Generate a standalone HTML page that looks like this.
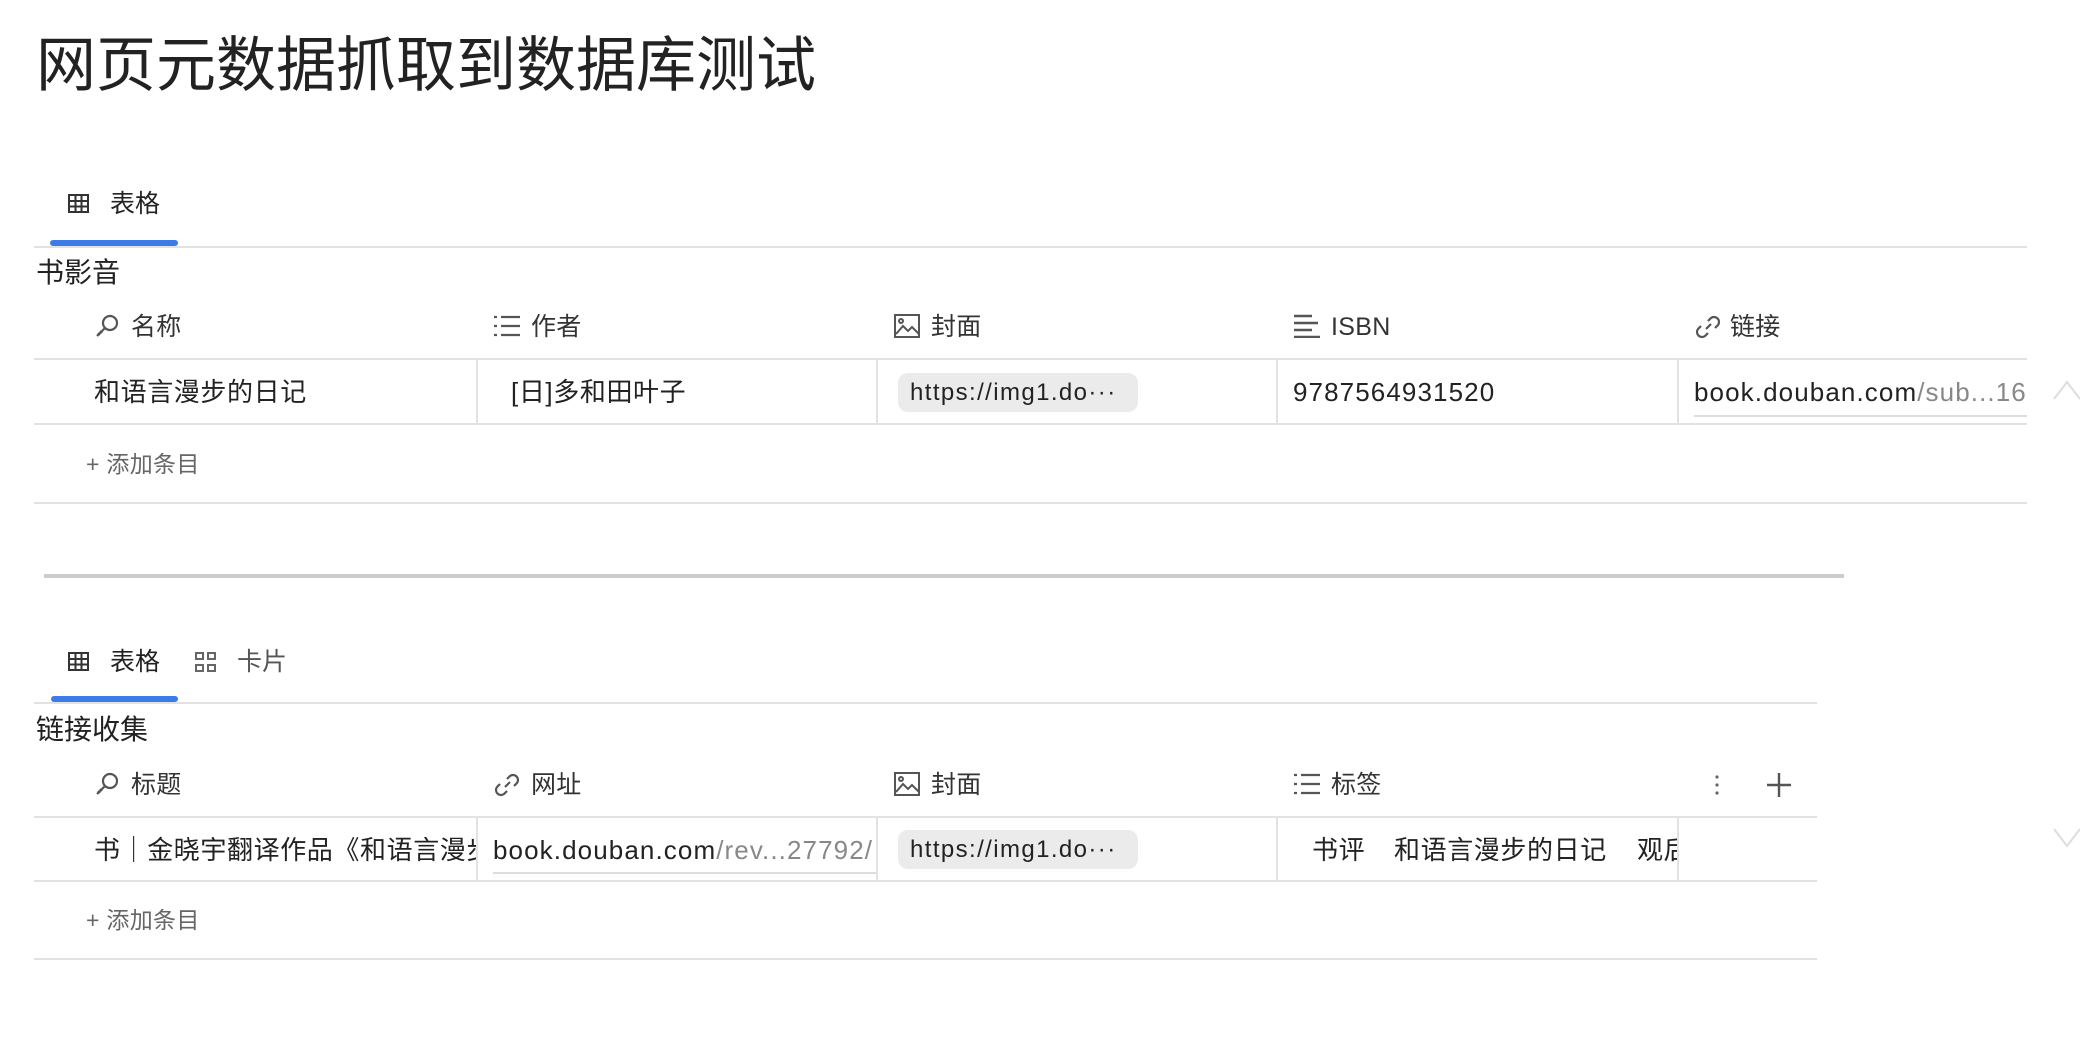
<!DOCTYPE html>
<html><head><meta charset="utf-8"><style>
*{margin:0;padding:0;box-sizing:border-box}
body{width:2080px;height:1050px;background:#fff;position:relative;overflow:hidden;font-family:"Liberation Sans","Noto Sans CJK SC",sans-serif;color:#222}
.a{position:absolute;white-space:nowrap}
.h{font-size:25px;color:#333;line-height:30px;letter-spacing:0.3px}
.c{font-size:26px;color:#222;line-height:30px;letter-spacing:0.6px}
.hl{position:absolute;height:2px;background:#e2e2e2}
.vl{position:absolute;width:2px;background:#e2e2e2}
.pill{position:absolute;background:#ebebeb;border-radius:10px;font-size:24px;line-height:39px;padding-left:12px;color:#222;letter-spacing:1.4px;overflow:hidden}
.add{font-size:23px;color:#666;line-height:28px;letter-spacing:0.3px}
.ul{position:absolute;height:6px;background:#3b7ce9;border-radius:3px}
svg{position:absolute}
</style></head><body>
<div class="a" style="left:36px;top:31px;font-size:60px;line-height:70px;color:#222;letter-spacing:0">网页元数据抓取到数据库测试</div>

<svg style="left:68px;top:194px" width="21" height="19" viewBox="0 0 21 19" fill="none" stroke="#333" stroke-width="2"><rect x="1" y="1" width="19" height="17"/><path d="M1 7h19M1 12.5h19M7.5 1v17M13.5 1v17"/></svg>
<div class="a" style="left:110px;top:189px;font-size:25px;line-height:30px;color:#222">表格</div>
<div class="ul" style="left:50px;top:240px;width:128px"></div>
<div class="hl" style="left:34px;top:246px;width:1993px"></div>
<div class="a" style="left:36px;top:256px;font-size:28px;line-height:34px;color:#222">书影音</div>

<svg style="left:94px;top:313px" width="26" height="26" viewBox="0 0 26 26" fill="none" stroke="#555" stroke-width="2.2"><circle cx="16" cy="10" r="7"/><path d="M11 15L3 23M4 20l2 2M6 18l2 2"/></svg>
<div class="a h" style="left:131px;top:312px">名称</div>
<svg style="left:493px;top:315px" width="28" height="22" viewBox="0 0 28 22" fill="none" stroke="#555" stroke-width="2.2"><path d="M8 2h19M8 11h19M8 20h19M1 2h3M1 11h3M1 20h3"/></svg>
<div class="a h" style="left:531px;top:312px">作者</div>
<svg style="left:894px;top:314px" width="26" height="24" viewBox="0 0 26 24" fill="none" stroke="#555" stroke-width="2"><rect x="1" y="1" width="24" height="22"/><circle cx="7" cy="7" r="2"/><path d="M2 20l7-8 5 5 4-4 7 7"/></svg>
<div class="a h" style="left:931px;top:312px">封面</div>
<svg style="left:1293px;top:314px" width="28" height="24" viewBox="0 0 28 24" fill="none" stroke="#555" stroke-width="2.4"><path d="M1 2h18M1 9h24M1 16h18M1 23h26"/></svg>
<div class="a h" style="left:1331px;top:312px">ISBN</div>
<svg style="left:1694px;top:313px" width="28" height="28" viewBox="0 0 28 28" fill="none" stroke="#555" stroke-width="2.2"><path d="M12 16l5-5"/><path d="M14 8l3-3a5 5 0 017 7l-3 3"/><path d="M14 20l-3 3a5 5 0 01-7-7l3-3"/></svg>
<div class="a h" style="left:1730px;top:312px">链接</div>

<div class="hl" style="left:34px;top:358px;width:1993px"></div>
<div class="hl" style="left:34px;top:423px;width:1993px"></div>
<div class="vl" style="left:476px;top:358px;height:66px"></div>
<div class="vl" style="left:876px;top:358px;height:66px"></div>
<div class="vl" style="left:1276px;top:358px;height:66px"></div>
<div class="vl" style="left:1677px;top:358px;height:66px"></div>
<div class="a c" style="left:94px;top:377px">和语言漫步的日记</div>
<div class="a c" style="left:511px;top:377px">[日]多和田叶子</div>
<div class="pill" style="left:898px;top:373px;width:240px">https://img1.do···</div>
<div class="a c" style="left:1293px;top:377px;letter-spacing:1.1px">9787564931520</div>
<div style="position:absolute;left:1694px;top:372px;width:333px;height:46px;overflow:hidden"><div class="a c" style="left:0;top:5px;letter-spacing:1.1px">book.douban.com<span style="color:#888">/sub...16022</span></div><div style="position:absolute;left:0;top:43px;width:333px;height:2px;background:#ddd"></div></div>

<div class="a add" style="left:86px;top:450px">+ 添加条目</div>
<div class="hl" style="left:34px;top:502px;width:1993px"></div>
<svg style="left:2053px;top:380px" width="30" height="20" viewBox="0 0 30 20" fill="none" stroke="#ddd" stroke-width="2"><path d="M1 19L14 2 27 19"/></svg>

<div style="position:absolute;left:44px;top:574px;width:1800px;height:4px;background:#ccc"></div>

<svg style="left:68px;top:652px" width="21" height="19" viewBox="0 0 21 19" fill="none" stroke="#333" stroke-width="2"><rect x="1" y="1" width="19" height="17"/><path d="M1 7h19M1 12.5h19M7.5 1v17M13.5 1v17"/></svg>
<div class="a" style="left:110px;top:647px;font-size:25px;line-height:30px;color:#222">表格</div>
<svg style="left:195px;top:652px" width="21" height="20" viewBox="0 0 21 20" fill="none" stroke="#666" stroke-width="2"><rect x="1" y="1" width="7" height="6"/><rect x="13" y="1" width="7" height="6"/><rect x="1" y="13" width="7" height="6"/><rect x="13" y="13" width="7" height="6"/></svg>
<div class="a" style="left:237px;top:647px;font-size:25px;line-height:30px;color:#555">卡片</div>
<div class="ul" style="left:51px;top:696px;width:127px"></div>
<div class="hl" style="left:34px;top:702px;width:1783px"></div>
<div class="a" style="left:36px;top:713px;font-size:28px;line-height:34px;color:#222">链接收集</div>

<svg style="left:94px;top:771px" width="26" height="26" viewBox="0 0 26 26" fill="none" stroke="#555" stroke-width="2.2"><circle cx="16" cy="10" r="7"/><path d="M11 15L3 23M4 20l2 2M6 18l2 2"/></svg>
<div class="a h" style="left:131px;top:770px">标题</div>
<svg style="left:493px;top:771px" width="28" height="28" viewBox="0 0 28 28" fill="none" stroke="#555" stroke-width="2.2"><path d="M12 16l5-5"/><path d="M14 8l3-3a5 5 0 017 7l-3 3"/><path d="M14 20l-3 3a5 5 0 01-7-7l3-3"/></svg>
<div class="a h" style="left:531px;top:770px">网址</div>
<svg style="left:894px;top:772px" width="26" height="24" viewBox="0 0 26 24" fill="none" stroke="#555" stroke-width="2"><rect x="1" y="1" width="24" height="22"/><circle cx="7" cy="7" r="2"/><path d="M2 20l7-8 5 5 4-4 7 7"/></svg>
<div class="a h" style="left:931px;top:770px">封面</div>
<svg style="left:1293px;top:773px" width="28" height="22" viewBox="0 0 28 22" fill="none" stroke="#555" stroke-width="2.2"><path d="M8 2h19M8 11h19M8 20h19M1 2h3M1 11h3M1 20h3"/></svg>
<div class="a h" style="left:1331px;top:770px">标签</div>
<svg style="left:1714px;top:774px" width="6" height="22" viewBox="0 0 6 22" fill="#666"><circle cx="3" cy="3" r="1.6"/><circle cx="3" cy="11" r="1.6"/><circle cx="3" cy="19" r="1.6"/></svg>
<svg style="left:1766px;top:772px" width="26" height="26" viewBox="0 0 26 26" stroke="#555" stroke-width="2.4"><path d="M13 1v24M1 13h24"/></svg>

<div class="hl" style="left:34px;top:816px;width:1783px"></div>
<div class="hl" style="left:34px;top:880px;width:1783px"></div>
<div class="vl" style="left:476px;top:816px;height:66px"></div>
<div class="vl" style="left:876px;top:816px;height:66px"></div>
<div class="vl" style="left:1276px;top:816px;height:66px"></div>
<div class="vl" style="left:1677px;top:816px;height:66px"></div>
<div style="position:absolute;left:94px;top:834px;width:382px;height:32px;overflow:hidden"><div class="a c" style="left:0;top:1px">书｜金晓宇翻译作品《和语言漫步的日记》</div></div>
<div style="position:absolute;left:493px;top:828px;width:383px;height:46px;overflow:hidden"><div class="a c" style="left:0;top:7px;letter-spacing:1.1px">book.douban.com<span style="color:#888">/rev...27792/</span></div><div style="position:absolute;left:0;top:44px;width:383px;height:2px;background:#ddd"></div></div>
<div class="pill" style="left:898px;top:830px;width:240px">https://img1.do···</div>
<div style="position:absolute;left:1278px;top:834px;width:399px;height:32px;overflow:hidden"><div class="a c" style="left:34px;top:1px">书评</div><div class="a c" style="left:116px;top:1px">和语言漫步的日记</div><div class="a c" style="left:359px;top:1px">观后感</div></div>

<div class="a add" style="left:86px;top:906px">+ 添加条目</div>
<div class="hl" style="left:34px;top:958px;width:1783px"></div>
<svg style="left:2053px;top:828px" width="30" height="20" viewBox="0 0 30 20" fill="none" stroke="#ddd" stroke-width="2"><path d="M1 1L14 18 27 1"/></svg>
</body></html>
